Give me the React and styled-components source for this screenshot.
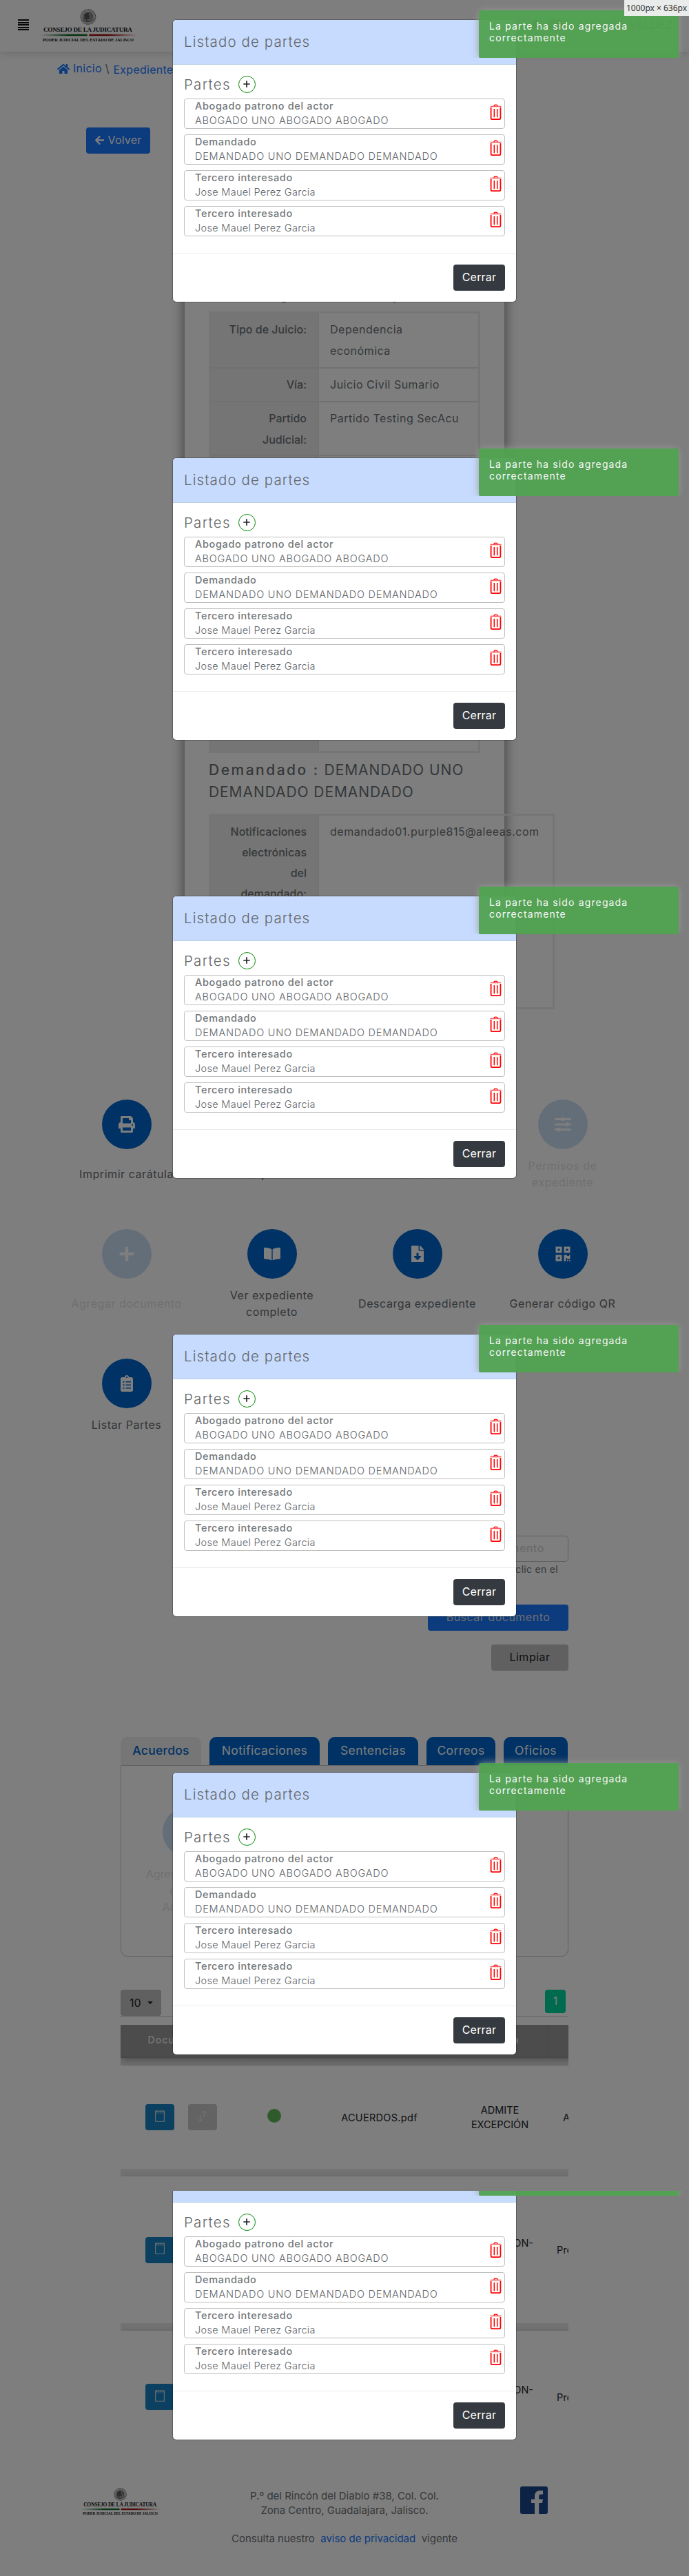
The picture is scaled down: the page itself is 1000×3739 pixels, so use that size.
import React from "react";
import styled, { createGlobalStyle, css } from "styled-components";
import { FaHome, FaArrowLeft, FaPrint, FaBookOpen, FaFileDownload, FaQrcode, FaClipboardList, FaPlus, FaSlidersH, FaBell } from "react-icons/fa";

const Global = createGlobalStyle`
  *{box-sizing:border-box}
  body{margin:0;background:#fff;font-family:Inter,"Open Sans",sans-serif;font-size:16px;line-height:24px;color:#6c7275;}
`;

const Page = styled.div`position:relative;width:1000px;height:3739px;overflow:hidden;display:flex;flex-direction:column;background:#fff;`;

/* ---------- top bar ---------- */
const TopBar = styled.header`height:75px;flex:none;display:flex;align-items:flex-start;padding:13px 24px 0 26px;box-shadow:0 2px 12px rgba(0,0,0,.16);`;
const Burger = styled.div`width:16px;height:16px;margin:15px 16px 0 0;display:flex;flex-direction:column;justify-content:space-between;
  i{display:block;height:2px;background:#111;}`;
const UserArea = styled.div`margin-left:auto;padding-top:11px;display:flex;align-items:center;gap:9px;color:#333;`;
const Badge = styled.span`width:22px;height:18px;border-radius:9px;background:#dc3545;`;
const UserName = styled.span`letter-spacing:.2px;margin-left:14px;white-space:nowrap;color:#555;`;

function Logo({ width = 141 }) {
  return (
    <svg width={width} height={width * 49 / 141} viewBox="0 0 141 49">
      <defs>
        <linearGradient id="lg"><stop offset="0" stopColor="#1a6b34" stopOpacity="0" /><stop offset=".6" stopColor="#1a6b34" /></linearGradient>
        <linearGradient id="lr"><stop offset=".4" stopColor="#a51c1c" /><stop offset="1" stopColor="#a51c1c" stopOpacity="0" /></linearGradient>
      </defs>
      <circle cx="70" cy="11.5" r="10.8" fill="#c4c4c4" stroke="#777" strokeWidth="1.2" strokeDasharray="1.5 .8" />
      <path d="M62 13c0-6 4-9 8-9 4 1 7 3 7 7-1 5-4 7-8 8-4-1-6-3-7-6z" fill="#999" />
      <path d="M64 9c3-4 6-4 8-3l-2 3 4 1-3 2 3 3-5-1-1 4-2-4-3 1 2-3z" fill="#555" />
      <path d="M62 15c4 5 12 5 16-1M72 5c4 2 5 6 3 9" stroke="#444" fill="none" />
      <text x="5" y="33.2" fontFamily="Liberation Serif" fontWeight="700" fontSize="9.2" textLength="129" fill="#111">CONSEJO DE LA JUDICATURA</text>
      <rect x="0" y="36.6" width="69" height="2.6" rx="1.3" fill="url(#lg)" />
      <rect x="71" y="36.6" width="70" height="2.6" rx="1.3" fill="url(#lr)" />
      <text x="4" y="47" fontFamily="Liberation Serif" fontWeight="700" fontSize="6.4" textLength="132" fill="#111">PODER JUDICIAL DEL ESTADO DE JALISCO</text>
    </svg>
  );
}

/* ---------- intro ---------- */
const Crumbs = styled.nav`height:50px;flex:none;margin:12px 0 0 83px;display:flex;align-items:flex-start;white-space:nowrap;
  svg{margin:4px 5px 0 0;}`;
const CrumbLink = styled.a`color:#1a78ff;letter-spacing:.25px;margin-top:${p => p.$drop || 0}px;`;
const Slash = styled.span`margin:0 6px 0 5px;`;
const BackButton = styled.button`flex:none;align-self:flex-start;margin:48px 0 0 125px;width:93px;height:38px;border:0;border-radius:4px;background:#1a78ff;color:#fff;
  font:inherit;display:flex;align-items:center;justify-content:center;gap:4px;padding:0 0 2px;letter-spacing:.2px;`;

/* ---------- case card ---------- */
const Card = styled.section`flex:none;width:464px;height:1060px;margin:37px 0 0 268px;padding:155px 35px 0;box-shadow:0 0 18px rgba(0,0,0,.55);`;
const CardTitle = styled.h3`margin:0;height:37px;font-size:20px;line-height:26px;font-weight:600;color:#343a40;white-space:nowrap;text-align:center;letter-spacing:.4px;`;
const Sheet = styled.div`width:${p => p.$w || 394}px;height:${p => p.$h}px;border:3px solid #ededed;display:flex;flex-direction:column;`;
const SheetRow = styled.div`display:flex;height:${p => p.$h}px;flex:${p => (p.$fill ? 1 : "none")};border-bottom:${p => (p.$fill ? 0 : 2)}px solid #e4e4e4;`;
const Label = styled.div`width:157px;flex:none;padding:8px 16px 9px 6px;text-align:right;font-weight:500;line-height:${p => p.$lh || 31}px;background:#ededed;border-right:2px solid #e6e6e6;
  ${p => p.$end && css`display:flex;align-items:flex-end;justify-content:flex-end;`}`;
const Value = styled.div`padding:8px 0 0 16px;line-height:${p => p.$lh || 31}px;letter-spacing:.5px;white-space:nowrap;`;
const PartyTitle = styled.h4`margin:9px 0 0;height:79px;font-size:21px;line-height:32px;font-weight:400;letter-spacing:.92px;white-space:nowrap;b{font-weight:500;letter-spacing:2.5px}`;

/* ---------- actions ---------- */
const Actions = styled.section`flex:none;height:564px;margin:276px 78px 0;display:grid;grid-template-columns:repeat(4,211px);grid-auto-rows:188px;`;
const Action = styled.div`display:flex;flex-direction:column;align-items:center;opacity:${p => (p.$off ? 0.2 : 1)};text-align:center;`;
const Disc = styled.div`width:72px;height:72px;flex:none;border-radius:50%;background:#0066cc;color:#fff;display:flex;align-items:center;justify-content:center;font-size:24px;`;
const ActionText = styled.div`height:${p => p.$h || 48}px;margin-top:12px;display:flex;align-items:center;width:150px;justify-content:center;white-space:pre;letter-spacing:.55px;color:#666b6f;`;

/* ---------- search ---------- */
const Search = styled.section`flex:none;height:292px;margin:69px 175px 0;display:flex;flex-direction:column;align-items:flex-end;`;
const Input = styled.div`width:420px;height:38px;border:1px solid #c4c4c4;border-radius:5px;text-align:right;padding:5px 34px 0 0;color:#d0d0d0;letter-spacing:.6px;`;
const Hint = styled.small`font-size:14px;line-height:20px;margin:1px 15px 0 0;letter-spacing:.3px;`;
const Wide = styled.button`height:38px;width:${p => p.$w}px;margin-top:${p => p.$mt}px;padding:0 0 2px;border:0;border-radius:4px;font:inherit;letter-spacing:.5px;background:${p => p.$bg};color:${p => p.$fg};`;

/* ---------- tabs ---------- */
const Tabs = styled.div`flex:none;height:41px;margin:0 175px;display:flex;gap:12px;`;
const Tab = styled.div`height:41px;width:${p => p.$w}px;border-radius:10px 10px 0 0;background:${p => (p.$on ? "#eee" : "#0066cc")};color:${p => (p.$on ? "#0066cc" : "#fff")};font-size:17.5px;font-weight:${p => (p.$on ? 500 : 400)};letter-spacing:${p => (p.$on ? .25 : .4)}px;text-align:center;line-height:39px;`;
const Panel = styled.div`flex:none;height:278px;margin:0 175px;border:1px solid #c4c4c4;border-radius:0 0 10px 10px;padding:60px 0 0 30px;`;
const PanelAction = styled(Action)`width:132px;`;
const PanelText = styled.div`margin-top:13px;line-height:24px;white-space:pre;`;

/* ---------- table ---------- */
const Toolbar = styled.div`flex:none;height:39px;margin:48px 175px 12px;border-bottom:1px solid #ccc;display:flex;justify-content:space-between;padding-right:4px;`;
const PageSize = styled.div`width:59px;height:38px;border-radius:4px;background:#c2c2c2;color:#222;display:flex;align-items:center;gap:9px;padding-left:13px;
  &::after{content:"";border:4px solid transparent;border-top-color:#222;border-bottom:0;}`;
const PageNo = styled.div`width:30px;height:34px;border-radius:4px;background:#00d6a1;color:#fff;text-align:center;line-height:33px;`;
const Grid = styled.div`flex:none;height:588px;width:650px;margin-left:175px;overflow:hidden;background:#fff;`;
const HeadRow = styled.div`width:800px;height:48px;background:#9b9b9b;color:#eee;display:flex;font-size:14px;font-weight:500;letter-spacing:1px;box-shadow:0 3px 10px rgba(0,0,0,.35);position:relative;border-bottom:2px solid #929292;`;
const Cell = styled.div`width:${p => p.$w}px;flex:none;display:flex;align-items:center;justify-content:center;text-align:center;white-space:pre;`;
const HeadCell = styled(Cell)`border-right:1px solid #8f8f8f;padding-bottom:3px;`;
const BodyRow = styled.div`width:800px;height:${p => p.$h}px;margin-top:11px;background:#fff;display:flex;font-size:14.5px;line-height:21px;color:#212529;box-shadow:0 3px 10px rgba(0,0,0,.25), 0 -11px 0 #e8e8e8;`;
const FileName = styled.span`letter-spacing:.3px;`;
const IconButton = styled.div`width:42px;height:38px;border-radius:4px;margin-left:${p => p.$ml || 0}px;background:${p => (p.$off ? "#c8c8c8" : "#1a83c5")};color:#fff;display:flex;align-items:center;justify-content:center;padding-bottom:4px;`;
const Dot = styled.div`width:20px;height:20px;border-radius:50%;background:#5fb85a;margin:0 2px 5px 0;`;
const Edge = styled.div`padding-left:${p => p.$pl}px;display:flex;align-items:center;`;

/* ---------- footer ---------- */
const Footer = styled.footer`flex:none;height:208px;padding:81px 0 0 117px;display:grid;grid-template-columns:117px 521px 60px;align-content:start;font-size:15px;line-height:21px;text-align:center;
  > svg:first-child{margin-top:3px}`;
const Address = styled.div`padding:4px 0 0 11px;`;
const Facebook = styled.svg`margin-top:1px;`;
const Privacy = styled.div`grid-column:2;white-space:pre;margin-top:20px;padding-left:11px;a{color:#1a78ff}`;

/* ---------- overlay ---------- */
const Backdrop = styled.div`position:absolute;inset:0;background:rgba(0,0,0,.505);`;
const Frame = styled.div`position:absolute;left:0;top:${p => p.$top}px;width:1000px;height:${p => p.$h}px;overflow:hidden;display:flex;flex-direction:column;justify-content:flex-end;`;
const FrameInner = styled.div`position:relative;flex:none;height:636px;padding-top:29px;`;
const Modal = styled.div`width:498px;height:409px;margin-left:251px;background:#fff;border-radius:5px;box-shadow:0 0 0 1px rgba(0,0,0,.25);overflow:hidden;display:flex;flex-direction:column;`;
const ModalHead = styled.div`height:65px;flex:none;background:#c7dbff;border-bottom:1px solid #bacfe6;padding:17px 16px;font-size:20.5px;font-weight:300;line-height:30px;letter-spacing:1.1px;color:#62676a;`;
const ModalBody = styled.div`height:274px;padding:16px 16px 0;border-bottom:1px solid #e9ecef;`;
const PartsTitle = styled.div`display:flex;align-items:center;gap:11px;height:25px;margin-bottom:8px;font-size:20.5px;font-weight:300;letter-spacing:1.25px;color:#62676a;`;
const AddButton = styled.span`width:25px;height:25px;border:1px solid #0a8a0a;border-radius:50%;display:flex;align-items:center;justify-content:center;padding-bottom:2px;`;
const Part = styled.div`height:44px;margin-bottom:8px;border:1px solid #bfbfbf;border-radius:4px;padding:0 4px 0 15px;display:flex;justify-content:space-between;font-size:14.5px;line-height:21px;
  svg{margin-top:7px}`;
const Role = styled.div`font-weight:500;letter-spacing:.64px;margin-top:-1px;color:#72777a;`;
const Person = styled.div`letter-spacing:${p => (p.$caps ? .77 : .3)}px;font-weight:300;color:#5f666a;`;
const ModalFoot = styled.div`padding:16px;display:flex;justify-content:flex-end;`;
const CloseButton = styled.button`width:75px;height:38px;border:0;border-radius:4px;background:#343a40;color:#fff;font:inherit;padding:0 0 2px;letter-spacing:.2px;`;
const ToastClip = styled.div`position:absolute;right:0;top:0;width:325px;height:84px;overflow:hidden;padding:15px 15px 0 20px;`;
const Toast = styled.div`height:69px;width:290px;border-radius:3px 3px 2px 2px;background:#51a351;opacity:.95;box-shadow:0 0 12px #999;color:#fff;font-size:14px;line-height:17px;letter-spacing:1.15px;padding:14px 15px;`;
const SizeTag = styled.div`position:absolute;right:0;top:0;width:94px;height:23px;background:#e9ecea;color:#333;font:12px/23px "Noto Sans",sans-serif;text-align:center;white-space:nowrap;`;

const Trash = () => (
  <svg width="17" height="24" viewBox="0 0 17 24" fill="none" stroke="red">
    <path d="M.5 3.5h16" strokeOpacity=".65" strokeWidth="1.7" />
    <path d="M6 3c0-2.4 5-2.4 5 0" strokeWidth="1.3" />
    <path d="M1.6 5v15.6c0 1 .6 1.6 1.5 1.6h10.8c.9 0 1.5-.6 1.5-1.6V5" strokeWidth="1.8" />
    <path d="M6.3 7v12.200M10.700 7v12.200" strokeWidth="1.500" />
  </svg>
);

const Plus = () => (
  <svg width="10" height="10" viewBox="0 0 10 10" stroke="#212529" strokeWidth="1.700"><path d="M5 .3v9.400M.3 5h9.400" /></svg>
);

const Notepad = () => (
  <svg width="14" height="17" viewBox="0 0 14 17" fill="none" stroke="#ddd">
    <path d="M.6 1h12.800v15.300H.6z" strokeWidth="1.100" /><path d="M2.500 1v3.500M5.500 1v3.500M8.500 1v3.500M11.500 1v3.500" strokeWidth="1.500" strokeDasharray="2 .6" />
  </svg>
);

const Swap = () => (
  <svg width="15" height="17" viewBox="0 0 15 17" fill="none" stroke="#eee" strokeWidth="1">
    <path d="M10.500 9V1M7 4.500L10.500 1 14 4.500M4.500 8v8M1 12.500L4.500 16 8 12.500M4.500 8h2M8.500 9h2" />
  </svg>
);

const parts = [
  { role: "Abogado patrono del actor", name: "ABOGADO UNO ABOGADO ABOGADO", caps: true },
  { role: "Demandado", name: "DEMANDADO UNO DEMANDADO DEMANDADO", caps: true },
  { role: "Tercero interesado", name: "Jose Mauel Perez Garcia" },
  { role: "Tercero interesado", name: "Jose Mauel Perez Garcia" },
];

function Dialog({ top, height = 636 }) {
  return (
    <Frame $top={top} $h={height}>
      <FrameInner>
        <Modal>
          <ModalHead>Listado de partes</ModalHead>
          <ModalBody>
            <PartsTitle>Partes <AddButton><Plus /></AddButton></PartsTitle>
            {parts.map(({ role, name, caps }, i) => (
              <Part key={i}><div><Role>{role}</Role><Person $caps={caps}>{name}</Person></div><Trash /></Part>
            ))}
          </ModalBody>
          <ModalFoot><CloseButton>Cerrar</CloseButton></ModalFoot>
        </Modal>
        <ToastClip><Toast>La parte ha sido agregada<br />correctamente</Toast></ToastClip>
      </FrameInner>
    </Frame>
  );
}

const actions = [
  { icon: FaPrint, text: "Imprimir carátula" },
  { icon: FaPlus, text: "Enviar promoción" },
  { icon: FaFileDownload, text: "Editar carátula" },
  { icon: FaSlidersH, text: "Permisos de\nexpediente", off: true },
  { icon: FaPlus, text: "Agregar documento", off: true },
  { icon: FaBookOpen, text: "Ver expediente\ncompleto" },
  { icon: FaFileDownload, text: "Descarga expediente" },
  { icon: FaQrcode, text: "Generar código QR" },
  { icon: FaClipboardList, text: "Listar Partes", h: 24 },
];

export default function App() {
  return (
    <Page>
      <Global />
      <TopBar>
        <Burger><i /><i /><i /><i /><i /></Burger>
        <Logo />
        <UserArea><FaBell /><Badge /><UserName>MANUEL VALDEZ</UserName></UserArea>
      </TopBar>
      <Crumbs>
        <FaHome size={18} color="#1a78ff" /><CrumbLink>Inicio</CrumbLink><Slash>\</Slash><CrumbLink $drop={2}>Expediente</CrumbLink>
      </Crumbs>
      <BackButton><FaArrowLeft size={15} /> Volver</BackButton>
      <Card>
        <CardTitle>Datos generales del expediente</CardTitle>
        <Sheet $h={641}>
          <SheetRow $h={80}><Label>Tipo de Juicio:</Label><Value>Dependencia<br />económica</Value></SheetRow>
          <SheetRow $h={49}><Label>Vía:</Label><Value>Juicio Civil Sumario</Value></SheetRow>
          <SheetRow $h={78}><Label>Partido<br />Judicial:</Label><Value>Partido Testing SecAcu</Value></SheetRow>
          <SheetRow $fill><Label $end>Abogado patrono:</Label><Value /></SheetRow>
        </Sheet>
        <PartyTitle><b>Demandado :</b> DEMANDADO UNO<br />DEMANDADO DEMANDADO</PartyTitle>
        <Sheet $w={502} $h={284}>
          <SheetRow $fill><Label $lh={30}>Notificaciones<br />electrónicas<br />del<br />demandado:</Label><Value $lh={30}>demandado01.purple815@aleeas.com</Value></SheetRow>
        </Sheet>
      </Card>
      <Actions>
        {actions.map(({ icon: Icon, text, off, h }, i) => (
          <Action key={i} $off={off}><Disc><Icon /></Disc><ActionText $h={h}>{text}</ActionText></Action>
        ))}
      </Actions>
      <Search>
        <Input>Buscar documento</Input>
        <Hint>Haz clic en el</Hint>
        <Wide $w={204} $mt={41} $bg="#1a78ff" $fg="#ddd">Buscar documento</Wide>
        <Wide $w={112} $mt={20} $bg="#c2c2c2" $fg="#222">Limpiar</Wide>
      </Search>
      <Tabs>
        <Tab $w={117} $on>Acuerdos</Tab><Tab $w={160}>Notificaciones</Tab><Tab $w={131}>Sentencias</Tab><Tab $w={100}>Correos</Tab><Tab $w={93}>Oficios</Tab>
      </Tabs>
      <Panel><PanelAction $off><Disc><FaPlus /></Disc><PanelText>{"Agregar archivo\nde tipo\nAcuerdos"}</PanelText></PanelAction></Panel>
      <Toolbar><PageSize>10</PageSize><PageNo>1</PageNo></Toolbar>
      <Grid>
        <HeadRow>
          <HeadCell $w={175}>Documentos</HeadCell><HeadCell $w={97}>Firma</HeadCell><HeadCell $w={207}>Nombre</HeadCell><HeadCell $w={143}>Materia</HeadCell>
        </HeadRow>
        <BodyRow $h={150}>
          <Cell $w={175}><IconButton><Notepad /></IconButton><IconButton $off $ml={20}><Swap /></IconButton></Cell>
          <Cell $w={97}><Dot /></Cell><Cell $w={207}><FileName>ACUERDOS.pdf</FileName></Cell><Cell $w={143}>{"ADMITE\nEXCEPCIÓN"}</Cell><Edge $pl={20}>ACUERDO</Edge>
        </BodyRow>
        {[213, 192].map(h => (
          <BodyRow key={h} $h={h}>
            <Cell $w={175}><IconButton><Notepad /></IconButton><IconButton $off $ml={20}><Swap /></IconButton></Cell>
            <Cell $w={97}><Dot /></Cell><Cell $w={207}><FileName>PROMOCION.pdf</FileName></Cell><Cell $w={143}>{"PROMOCION-\nES"}</Cell><Edge $pl={11}>Promoción</Edge>
          </BodyRow>
        ))}
      </Grid>
      <Footer>
        <Logo width={116} />
        <Address>P.º del Rincón del Diablo #38, Col. Col.<br />Zona Centro, Guadalajara, Jalisco.</Address>
        <Facebook width="40" height="40" viewBox="0 0 40 40">
          <rect width="40" height="40" rx="3" fill="#1a478f" />
          <path d="M21 40V24h-5v-5.500h5V14c0-5 3-8 8-8h4v5.500h-3c-2 0-2.800 1-2.800 2.800v4.200H33L32 24h-4.800v16z" fill="#f5f5f5" />
        </Facebook>
        <Privacy>Consulta nuestro  <a>aviso de privacidad</a>  vigente</Privacy>
      </Footer>
      <Backdrop />
      {[0, 636, 1272, 1908, 2544].map(t => <Dialog key={t} top={t} />)}
      <Dialog top={3180} height={559} />
      <SizeTag>1000px × 636px</SizeTag>
    </Page>
  );
}
